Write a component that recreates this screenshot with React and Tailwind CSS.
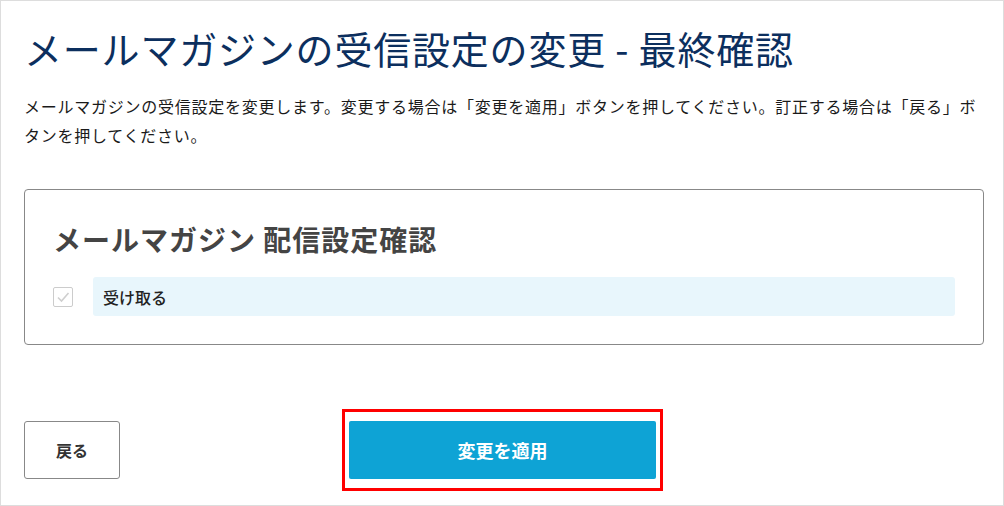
export default function App() {
  return (
    <div
      className="w-[1004px] h-[506px] border border-[#dddddd] bg-white pl-[23px] pr-[19px] text-[#222]"
      style={{ fontFamily: '"Noto Sans CJK JP", "Noto Sans", sans-serif' }}
    >
      <h1 className="pt-[18px] text-[38px] leading-[57px] text-[#0c2f5e] tracking-[0.8px]">
        メールマガジンの受信設定の変更 - 最終確認
      </h1>
      <p className="mt-[16px] text-[16px] leading-[29px] tracking-[0.75px] text-[#1a1a1a]">
        メールマガジンの受信設定を変更します。変更する場合は「変更を適用」ボタンを押してください。訂正する場合は「戻る」ボタンを押してください。
      </p>

      <div className="mt-[39px] rounded-[4px] border border-[#888] px-[28px] pt-[29px] pb-[28px]">
        <h2 className="text-[28px] leading-[40px] font-bold text-[#444] tracking-[1px]">
          メールマガジン 配信設定確認
        </h2>
        <div className="mt-[18px] flex items-center gap-[20px]">
          <span className="flex h-[20px] w-[20px] shrink-0 items-center justify-center rounded-[2px] border border-[#cccccc] bg-white">
            <svg width="14" height="14" viewBox="0 0 14 14" fill="none">
              <path d="M2 7.5 L5.5 11 L12.5 3" stroke="#cfcfcf" strokeWidth="1.6" />
            </svg>
          </span>
          <div className="flex h-[39px] flex-1 items-center rounded-[3px] bg-[#e8f6fc] px-[10px] text-[16px] font-medium text-[#222]">
            受け取る
          </div>
        </div>
      </div>

      <div className="mt-[64px] grid grid-cols-[1fr_auto_1fr] items-center pr-[3px]">
        <div>
          <button className="h-[58px] w-[96px] rounded-[3px] border border-[#888] bg-white text-[16px] font-bold text-[#333]">
            戻る
          </button>
        </div>
        <div className="border-[3px] border-[#ff0000] px-[4px] py-[9px]">
          <button className="h-[58px] w-[307px] rounded-[2px] bg-[#0ea3d5] text-[18px] font-bold text-white">
            変更を適用
          </button>
        </div>
        <div />
      </div>
    </div>
  );
}
